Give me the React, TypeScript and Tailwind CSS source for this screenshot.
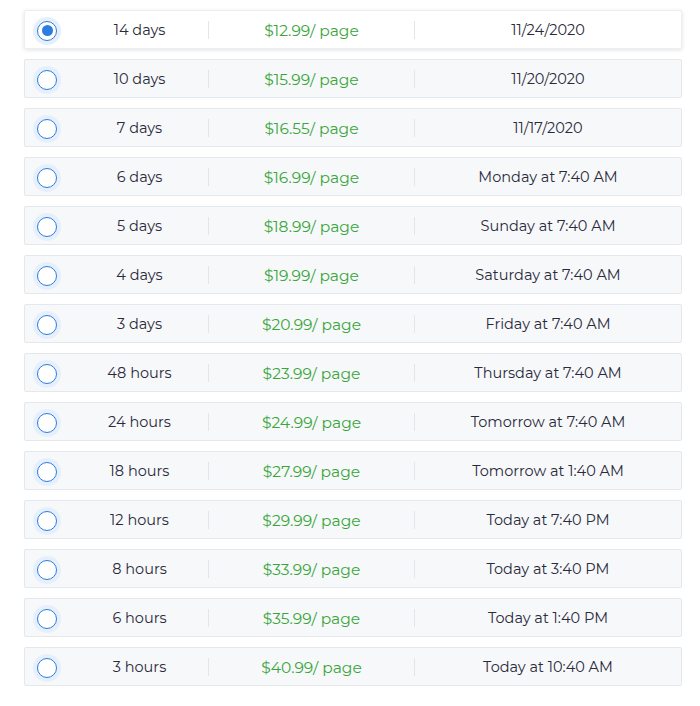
const rows: [string, string, string][] = [
  ["14 days", "$12.99", "11/24/2020"],
  ["10 days", "$15.99", "11/20/2020"],
  ["7 days", "$16.55", "11/17/2020"],
  ["6 days", "$16.99", "Monday at 7:40 AM"],
  ["5 days", "$18.99", "Sunday at 7:40 AM"],
  ["4 days", "$19.99", "Saturday at 7:40 AM"],
  ["3 days", "$20.99", "Friday at 7:40 AM"],
  ["48 hours", "$23.99", "Thursday at 7:40 AM"],
  ["24 hours", "$24.99", "Tomorrow at 7:40 AM"],
  ["18 hours", "$27.99", "Tomorrow at 1:40 AM"],
  ["12 hours", "$29.99", "Today at 7:40 PM"],
  ["8 hours", "$33.99", "Today at 3:40 PM"],
  ["6 hours", "$35.99", "Today at 1:40 PM"],
  ["3 hours", "$40.99", "Today at 10:40 AM"],
];

export default function App() {
  return (
    <div className="bg-white pt-[10px] pb-[20px] pl-[24px] pr-[18px] flex flex-col gap-[10px] text-[14.5px] text-[#2a2a3a]" style={{ fontFamily: "Montserrat, 'Open Sans', 'Liberation Sans', sans-serif" }}>
      {rows.map(([d, p, t], i) => {
        const sel = i === 0;
        return (
          <div key={i} className={`h-[39px] flex items-center rounded-[2px] border ${sel ? "bg-white border-[#eceef2] shadow-[0_1px_4px_rgba(0,0,0,0.12)]" : "bg-[#f7f8fa] border-[#e4e7ec]"}`}>
            <div className="w-[46px] flex justify-center pr-[2px] pt-[2px]">
              <div className="w-[28px] h-[28px] rounded-full bg-[#e6f0fc] flex items-center justify-center">
                <div className="w-[20px] h-[20px] rounded-full border-[1.5px] border-[#2b7de0] bg-white flex items-center justify-center">
                  {sel && <div className="w-[11px] h-[11px] rounded-full bg-[#2b7de0]" />}
                </div>
              </div>
            </div>
            <div className="w-[137px] text-center pt-[3px]">{d}</div>
            <div className="w-px h-[18px] bg-[#e3e5ea]" />
            <div className="w-[205px] text-center text-[#38a63a] text-[15.5px] pt-[3px]">{p}/ page</div>
            <div className="w-px h-[18px] bg-[#e3e5ea]" />
            <div className="flex-1 text-center pt-[3px]">{t}</div>
          </div>
        );
      })}
    </div>
  );
}
